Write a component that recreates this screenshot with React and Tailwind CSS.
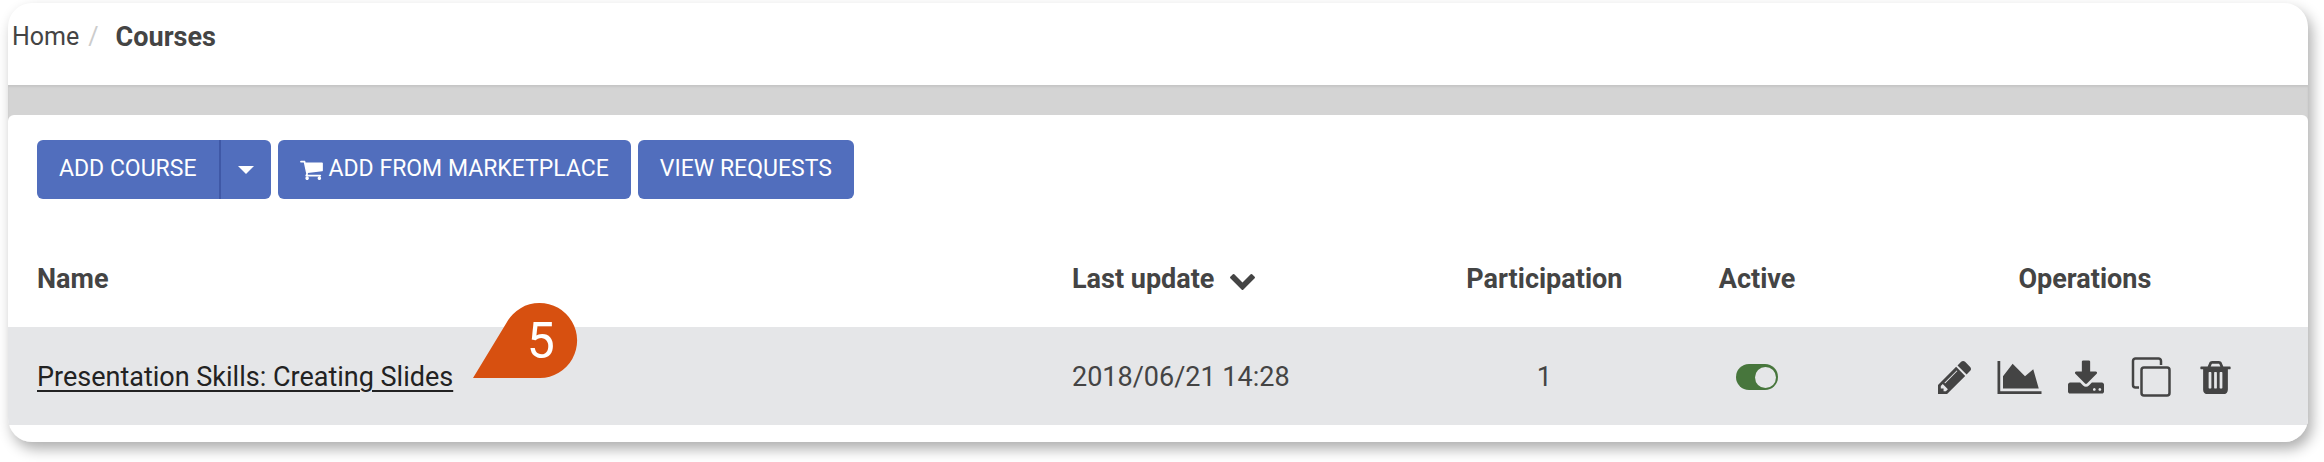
const columns = [
  { label: "Name", className: "w-[45%] text-left" },
  { label: "Last update", className: "w-[17.1%] text-left", sorted: true },
  { label: "Participation", className: "w-[9.4%] text-center" },
  { label: "Active", className: "w-[9.1%] text-center" },
  { label: "Operations", className: "w-[19.4%] text-center" },
];

const courses = [
  {
    name: "Presentation Skills: Creating Slides",
    updated: "2018/06/21 14:28",
    participants: 1,
    active: true,
    step: 5,
  },
];

function CartIcon() {
  return (
    <svg viewBox="64 128 1664 1536" className="w-[23px] h-[21px]" fill="currentColor" aria-hidden="true">
      <path d="M704 1536q0 52-38 90t-90 38-90-38-38-90 38-90 90-38 90 38 38 90zm896 0q0 52-38 90t-90 38-90-38-38-90 38-90 90-38 90 38 38 90zm128-1088v512q0 24-16.500 42.500t-40.500 21.500l-1044 122q13 60 13 70 0 16-24 64h920q26 0 45 19t19 45-19 45-45 19h-1024q-26 0-45-19t-19-45q0-11 8-31.500t16-36 21.500-40 15.500-29.500l-177-823h-204q-26 0-45-19t-19-45 19-45 45-19h256q16 0 28.500 6.500t19.500 15.500 13 24.500 8 26 5.500 29.500 4.500 26h1201q26 0 45 19t19 45z" />
    </svg>
  );
}

function ChevronIcon() {
  return (
    <svg viewBox="90 533 1612 1035" className="w-[25px] h-4" fill="currentColor" aria-hidden="true">
      <path d="M1683 808l-742 741q-19 19-45 19t-45-19l-742-741q-19-19-19-45.500t19-45.500l166-165q19-19 45-19t45 19l531 531 531-531q19-19 45-19t45 19l166 165q19 19 19 45.500t-19 45.500z" />
    </svg>
  );
}

function PencilIcon() {
  return (
    <svg viewBox="128 149 1515 1515" className="w-[33px] h-[33px]" fill="currentColor" aria-hidden="true">
      <path d="M491 1536l91-91-235-235-91 91v107h128v128h107zm523-928q0-22-22-22-10 0-17 7l-542 542q-7 7-7 17 0 22 22 22 10 0 17-7l542-542q7-7 7-17zm-54-192l416 416-832 832h-416v-416zm683 96q0 53-37 90l-166 166-416-416 166-165q36-38 90-38 53 0 91 38l235 234q37 39 37 91z" />
    </svg>
  );
}

function ChartIcon() {
  return (
    <svg viewBox="0 128 2048 1536" className="w-[45px] h-[33px]" fill="currentColor" aria-hidden="true">
      <path d="M2048 1536v128h-2048v-1536h128v1408h1920zm-384-1024l256 896h-1664v-576l448-576 576 576z" />
    </svg>
  );
}

function DownloadIcon() {
  return (
    <svg viewBox="64 0 1664 1536" className="w-[36px] h-[34px]" fill="currentColor" aria-hidden="true">
      <path d="M1344 1344q0-26-19-45t-45-19-45 19-19 45 19 45 45 19 45-19 19-45zm256 0q0-26-19-45t-45-19-45 19-19 45 19 45 45 19 45-19 19-45zm128-224v320q0 40-28 68t-68 28h-1472q-40 0-68-28t-28-68v-320q0-40 28-68t68-28h465l135 136q58 56 136 56t136-56l136-136h464q40 0 68 28t28 68zm-325-569q17 41-14 70l-448 448q-18 19-45 19t-45-19l-448-448q-31-29-14-70 17-39 59-39h256v-448q0-26 19-45t45-19h256q26 0 45 19t19 45v448h256q42 0 59 39z" />
    </svg>
  );
}

function CopyIcon() {
  return (
    <svg
      viewBox="0 0 44 40"
      className="w-[44px] h-10"
      fill="none"
      stroke="currentColor"
      strokeWidth="2.500"
      aria-hidden="true"
    >
      <path d="M31 8V4a2.500 2.500 0 0 0-2.500-2.500H5.500A2.500 2.500 0 0 0 3 4v24a2.500 2.500 0 0 0 2.500 2.500H9" />
      <rect x="11.500" y="10.500" width="28" height="28" rx="2.500" />
    </svg>
  );
}

function TrashIcon() {
  return (
    <svg viewBox="192 128 1408 1536" className="w-[31px] h-[33px]" fill="currentColor" aria-hidden="true">
      <path d="M704 1376v-704q0-14-9-23t-23-9h-64q-14 0-23 9t-9 23v704q0 14 9 23t23 9h64q14 0 23-9t9-23zm256 0v-704q0-14-9-23t-23-9h-64q-14 0-23 9t-9 23v704q0 14 9 23t23 9h64q14 0 23-9t9-23zm256 0v-704q0-14-9-23t-23-9h-64q-14 0-23 9t-9 23v704q0 14 9 23t23 9h64q14 0 23-9t9-23zm-544-992h448l-48-117q-7-9-17-11h-317q-10 2-17 11zm928 32v64q0 14-9 23t-23 9h-96v948q0 83-47 143.500t-113 60.500h-832q-66 0-113-58.500t-47-141.500v-952h-96q-14 0-23-9t-9-23v-64q0-14 9-23t23-9h309l70-167q15-37 54-63t79-26h320q40 0 79 26t54 63l70 167h309q14 0 23 9t9 23z" />
    </svg>
  );
}

const operations = [
  { label: "Edit", Icon: PencilIcon },
  { label: "Reports", Icon: ChartIcon },
  { label: "Export", Icon: DownloadIcon },
  { label: "Clone", Icon: CopyIcon },
  { label: "Delete", Icon: TrashIcon },
];

function StepMarker({ step }) {
  return (
    <span className="absolute left-full bottom-0 ml-5 mb-[17px] w-[105px] h-[75px] text-white">
      <svg viewBox="0 0 105 75" className="w-full h-full" aria-hidden="true">
        <path d="M0 75L34 19A37.500 37.500 0 1 1 67 75Z" fill="#d75010" />
      </svg>
      <span className="absolute inset-y-0 right-0 w-[75px] flex items-center justify-center text-[50px] leading-none">
        {step}
      </span>
    </span>
  );
}

function Toolbar() {
  const button =
    "h-[59px] flex items-center bg-[#516ebd] hover:bg-[#4560ab] text-white text-[23px]";

  return (
    <div className="flex flex-wrap gap-[7px] px-[29px] pt-[25px]">
      <div className="flex">
        <button type="button" className={`${button} rounded-l-md px-[22px]`}>
          ADD COURSE
        </button>
        <button
          type="button"
          aria-label="More ways to add a course"
          className={`${button} rounded-r-md px-[17px] border-l-2 border-[#3f58a6]`}
        >
          <svg viewBox="0 0 16 8" className="w-4 h-2" fill="currentColor" aria-hidden="true">
            <path d="M0 0h16L8 8z" />
          </svg>
        </button>
      </div>
      <button type="button" className={`${button} rounded-md px-[22px] gap-[6px]`}>
        <CartIcon />
        ADD FROM MARKETPLACE
      </button>
      <button type="button" className={`${button} rounded-md px-[22px]`}>
        VIEW REQUESTS
      </button>
    </div>
  );
}

function CourseRow({ course }) {
  return (
    <tr className="h-[98px] bg-[#e5e6e8]">
      <td className="px-[29px] pt-[2px]">
        <span className="relative inline-block">
          <a href="#course" className="text-[#222] underline decoration-2 underline-offset-4">
            {course.name}
          </a>
          <StepMarker step={course.step} />
        </span>
      </td>
      <td className="px-[29px] pt-[2px]">{course.updated}</td>
      <td className="pt-[2px] text-center">{course.participants}</td>
      <td className="pt-[2px]">
        <input
          type="checkbox"
          role="switch"
          aria-label="Active"
          defaultChecked={course.active}
          className="appearance-none flex items-center mx-auto w-[42px] h-[26px] rounded-full px-[2px] bg-gray-500 checked:bg-[#47763c] checked:justify-end before:block before:w-[21px] before:h-[21px] before:rounded-full before:bg-[#e5e6e8]"
        />
      </td>
      <td className="pt-[2px]">
        <div className="flex items-center justify-center gap-[26px]">
          {operations.map(({ label, Icon }) => (
            <button key={label} type="button" aria-label={label}>
              <Icon />
            </button>
          ))}
        </div>
      </td>
    </tr>
  );
}

export default function App() {
  return (
    <div className="pt-[3px] pl-2 pr-4 pb-5 bg-white font-['Roboto',sans-serif] text-[#444]">
      <main className="rounded-3xl overflow-hidden bg-white shadow-[4px_7px_14px_rgba(0,0,0,0.32)]">
        <nav aria-label="Breadcrumb" className="h-[82px] px-1 pt-[18px]">
          <ol className="flex items-center gap-[9px] leading-8">
            <li className="text-[25px]">
              <a href="#home">Home</a>
            </li>
            <li aria-hidden="true" className="text-[25px] text-[#ccc]">
              /
            </li>
            <li className="pl-2 text-[27px] font-bold" aria-current="page">
              Courses
            </li>
          </ol>
        </nav>

        <div className="pt-[30px] bg-[#d4d4d4] shadow-[inset_0_2px_2px_#c6c6c6]">
          <section className="rounded-t-md bg-white pb-[17px]">
            <Toolbar />
            <table className="w-full table-fixed text-[27px] leading-9">
              <thead>
                <tr className="h-[128px]">
                  {columns.map((column) => (
                    <th
                      key={column.label}
                      scope="col"
                      className={`${column.className} px-[29px] pt-8 font-bold`}
                    >
                      {column.sorted ? (
                        <span className="flex items-center gap-4">
                          {column.label}
                          <span className="pt-[6px]">
                            <ChevronIcon />
                          </span>
                        </span>
                      ) : (
                        column.label
                      )}
                    </th>
                  ))}
                </tr>
              </thead>
              <tbody>
                {courses.map((course) => (
                  <CourseRow key={course.name} course={course} />
                ))}
              </tbody>
            </table>
          </section>
        </div>
      </main>
    </div>
  );
}
